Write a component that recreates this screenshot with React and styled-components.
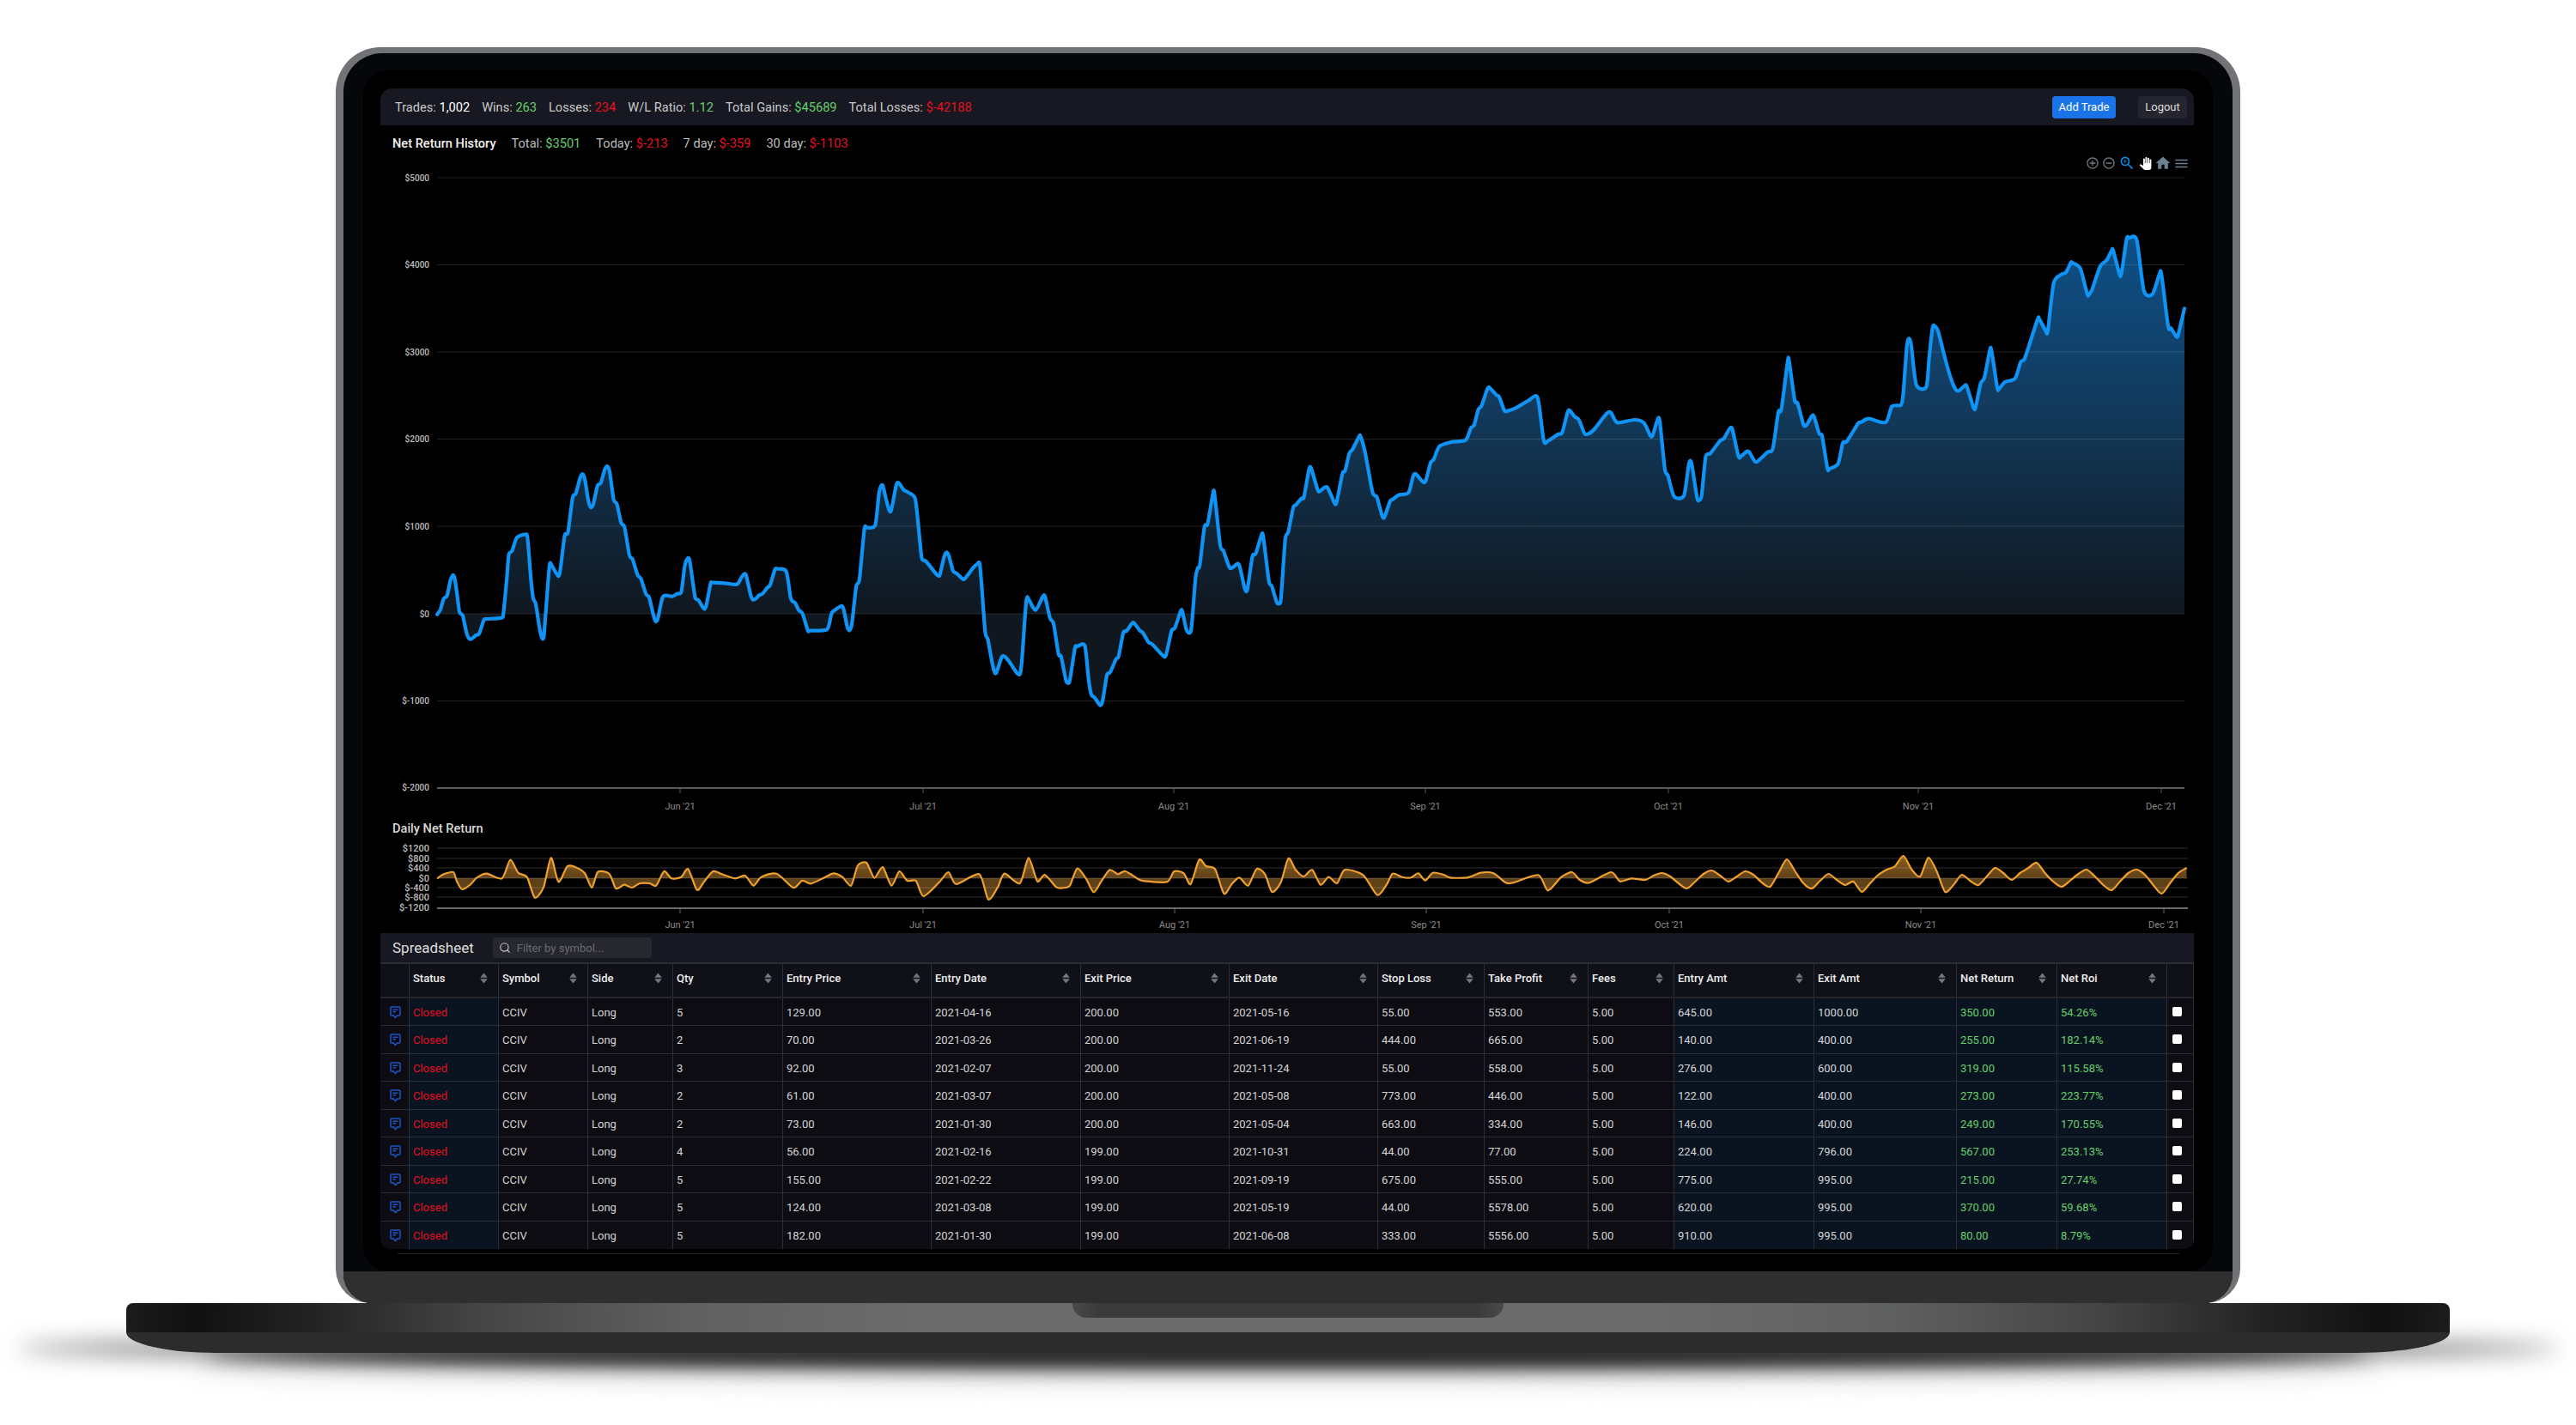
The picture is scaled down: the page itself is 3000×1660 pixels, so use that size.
import React from 'react'
import styled, { createGlobalStyle } from 'styled-components'
import { MdAddCircleOutline, MdRemoveCircleOutline, MdZoomIn, MdPanTool, MdHome, MdMenu } from 'react-icons/md'
import { Search } from 'lucide-react'

const GlobalStyle = createGlobalStyle`
    html, body {
        margin: 0;
        background: #fff;
        font-family: Roboto, "Liberation Sans", sans-serif;
    }
    * { box-sizing: border-box; }
`

const GREEN = '#68cf6c'
const RED = '#e5101f'
const COLUMNS = '34px 104px 104px 99px 128px 173px 174px 173px 173px 124px 121px 100px 163px 166px 117px 128px 31px'

const Stage = styled.div`
    position: relative;
    width: 3000px;
    height: 1660px;
    padding-top: 55px;
    display: flex;
    flex-direction: column;
    align-items: center;
    overflow: hidden;
`

const ShadowWide = styled.div`
    position: absolute;
    left: 20px;
    top: 1556px;
    width: 2960px;
    height: 30px;
    border-radius: 50%;
    background: #5f5f5f;
    filter: blur(13px);
`

const ShadowLow = styled.div`
    position: absolute;
    left: 240px;
    top: 1564px;
    width: 2520px;
    height: 28px;
    border-radius: 50%;
    background: #222;
    filter: blur(10px);
`

const ShadowFade = styled.div`
    position: absolute;
    left: 220px;
    top: 1576px;
    width: 2560px;
    height: 32px;
    border-radius: 50%;
    background: #cfcfcf;
    filter: blur(14px);
`

const Lid = styled.div`
    position: relative;
    width: 2218px;
    height: 1463px;
    padding: 7px 9px 0;
    background: #727377;
    border-radius: 52px 52px 40px 40px;
`

const Bezel = styled.div`
    height: 100%;
    display: flex;
    flex-direction: column;
    background: #05070a;
    border-radius: 45px 45px 34px 34px;
    overflow: hidden;
`

const ScreenFrame = styled.div`
    flex: 1;
    min-height: 0;
    padding: 19px 23px 0;
`

const Screen = styled.div`
    height: 100%;
    padding: 22px 22px 0 20px;
    background: #000;
    border-radius: 30px;
`

const Chin = styled.div`
    height: 37px;
    background: #2f2f2f;
`

const Base = styled.div`
    position: relative;
    width: 2706px;
`

const BaseTop = styled.div`
    height: 34px;
    border-radius: 8px 8px 0 0;
    background: linear-gradient(90deg, #1c1b1b 0%, #111 3%, #232323 8%, #444 15%, #5f6061 24%, #6b6b6b 34%, #6b6b6b 66%, #5f6061 76%, #444 85%, #232323 92%, #111 97%, #1c1b1b 100%);
`

const BaseBottom = styled.div`
    height: 24px;
    background: #2c2c2c;
    border-radius: 0 0 109px 106px / 0 0 24px 24px;
`

const Notch = styled.div`
    position: absolute;
    top: 0;
    left: 1102px;
    width: 502px;
    height: 17px;
    border-radius: 0 0 16px 16px;
    background: linear-gradient(90deg, #4a4a4a, #3a3a3a 6%, #3a3a3a 94%, #4a4a4a);
`

const TopBar = styled.div`
    height: 43px;
    display: flex;
    align-items: center;
    justify-content: space-between;
    padding: 0 8px 0 17px;
    background: #171821;
    border-radius: 14px 14px 0 0;
`

const StatRow = styled.div`
    display: flex;
    align-items: center;
    gap: 14px;
    padding-top: 1px;
    font-size: 14.6px;
    color: #c9c9c9;
`

const Value = styled.span`
    color: ${props => props.$color || '#fff'};
`

const Actions = styled.div`
    display: flex;
    gap: 26px;
`

const Button = styled.div`
    width: ${props => props.$width}px;
    height: 26px;
    display: flex;
    align-items: center;
    justify-content: center;
    border-radius: 4px;
    font-size: 13px;
    color: ${props => props.$primary ? '#fff' : '#ddd'};
    background: ${props => props.$primary ? '#1a73e8' : '#24252e'};
`

const ChartHead = styled.div`
    height: 22px;
    margin-top: 10px;
    padding-left: 14px;
    display: flex;
    align-items: center;
    gap: 18px;
    font-size: 14.6px;
    color: #bdbdbd;
`

const ChartTitle = styled.span`
    font-weight: 500;
    color: #f2f2f2;
`

const DailyTitle = styled.div`
    height: 22px;
    margin-top: 3px;
    padding: 1px 0 0 14px;
    display: flex;
    align-items: center;
    font-size: 14.6px;
    font-weight: 500;
    color: #d8d8d8;
`

const ChartBox = styled.div`
    position: relative;
    height: ${props => props.$height}px;
`

const ChartSvg = styled.svg`
    display: block;
`

const Toolbar = styled.div`
    position: absolute;
    top: 2px;
    right: 6px;
    display: grid;
    grid-template-columns: 20px 18px 24px 18px 24px 18px;
    align-items: center;
    justify-items: center;
    height: 20px;
`

const ToolIcon = styled.span`
    display: flex;
    color: ${props => props.$color};
`

const AxisValue = styled.text`
    font-size: ${props => props.$size}px;
    font-weight: 500;
    fill: #bdbdbd;
    text-anchor: end;
    dominant-baseline: central;
`

const AxisMonth = styled.text`
    font-size: 11px;
    fill: #8b8b8b;
    text-anchor: middle;
    dominant-baseline: central;
`

const SheetBar = styled.div`
    height: 36px;
    padding-left: 14px;
    display: flex;
    align-items: center;
    gap: 22px;
    background: #171821;
    border-bottom: 2px solid #2b2c34;
    font-size: 17px;
    color: #dedede;
`

const FilterBox = styled.div`
    width: 185px;
    height: 24px;
    padding-left: 7px;
    display: flex;
    align-items: center;
    gap: 7px;
    border-radius: 4px;
    background: #26272f;
    font-size: 13px;
    color: #6a6b72;
`

const Sheet = styled.div`
    border-radius: 0 0 12px 12px;
    overflow: hidden;
`

const HeadRow = styled.div`
    display: grid;
    grid-template-columns: ${COLUMNS};
    height: 39.5px;
    background: #101118;
    border-bottom: 2px solid #24252d;
`

const HeadCell = styled.div`
    display: flex;
    align-items: center;
    justify-content: space-between;
    padding: 0 12px 5px 4px;
    border-right: 1px solid #2c2d37;
    font-size: 13px;
    font-weight: 500;
    color: #ececec;
`

const Row = styled.div`
    display: grid;
    grid-template-columns: ${COLUMNS};
    height: 32.5px;
    border-bottom: 1px solid #2a2b34;
    &:last-child { border-bottom: 0; }
`

const Cell = styled.div`
    display: flex;
    align-items: center;
    justify-content: ${props => props.$center ? 'center' : 'flex-start'};
    padding: 2px ${props => props.$center ? 0 : 4}px 0;
    border-right: 1px solid #2c2d37;
    background: ${props => props.$tint ? '#0a1421' : '#0d0c13'};
    font-size: 13px;
    color: ${props => props.$color || '#d4d4d4'};
`

const NoteSvg = styled.svg`
    margin-left: 2px;
`

const CheckBox = styled.input`
    appearance: none;
    width: 11px;
    height: 11px;
    margin: 0 8px 2px 0;
    border-radius: 2px;
    background: #fff;
`

const BottomRule = styled.div`
    height: 1px;
    margin: 5px 17px 0 20px;
    background: #232323;
`

// traced off the reference, each run is [x, y] in its own crop
const toPage = (points, originX, scaleX, originY) =>
    points.map(([x, y]) => [originX + x / scaleX, originY + y / 3])

const netReturn = [
    ...toPage([[50,647],[60,630],[70,592],[80,582],[90,530],[98,510],[104,525],[112,590],[118,640],[128,652],[138,705],[147,732],[155,732],[168,720],[178,714],[192,667],[200,663],[246,659],[252,640],[262,520],[268,438],[278,425],[293,378],[318,368],[325,380],[335,520],[342,590],[350,610],[358,670],[365,715],[370,732],[375,720],[383,600],[392,475],[398,475],[418,513],[425,490],[438,372],[448,360],[462,240],[472,225],[485,170],[493,157],[500,180],[510,250],[518,273],[525,262],[538,197],[548,188],[560,140],[568,130],[575,150],[587,245],[597,262],[610,327],[620,342],[635,440],[645,455],[660,510],[670,522],[685,575],[695,588],[708,650],[715,672],[722,660],[737,585],[765,584],[780,575],[793,568],[803,480],[810,455],[817,453],[825,510],[835,588],[845,597],[858,622],[864,628],[870,610],[882,540],[888,536],[930,539],[962,542],[975,520],[983,507],[990,510],[1003,575],[1010,595],[1020,592],[1030,580],[1040,575],[1055,553],[1063,545],[1078,490],[1087,488],[1112,497],[1125,585],[1130,600],[1140,608],[1150,632],[1162,645],[1178,703],[1185,704],[1235,701],[1245,670],[1252,640],[1280,618],[1287,630],[1298,690],[1305,703],[1312,680],[1325,550],[1335,525],[1350,350],[1358,344],[1383,335],[1395,220],[1405,195],[1415,240],[1425,282],[1432,282],[1447,195],[1455,188],[1470,212],[1485,222],[1505,245],[1518,380],[1525,452],[1538,462]], 490, 2.613, 500),
    ...toPage([[0,505],[8,512],[12,508],[25,445],[33,430],[40,445],[52,495],[62,503],[80,522],[88,522],[115,482],[125,472],[133,470],[140,560],[150,710],[158,735],[170,810],[178,848],[184,850],[200,797],[210,795],[225,815],[245,850],[256,855],[262,800],[275,600],[283,596],[303,632],[325,585],[332,585],[347,660],[358,680],[373,785],[381,795],[395,875],[402,887],[408,875],[423,765],[430,760],[453,757],[465,880],[473,928],[483,938],[500,965],[508,945],[520,860],[530,850],[548,803],[556,793],[570,712],[580,705],[598,677],[605,680],[620,703],[630,712],[647,745],[657,750],[690,790],[700,790],[717,705],[727,695],[745,635],[750,637],[762,700],[772,712],[778,690],[790,520],[797,485],[803,475],[817,342],[827,330],[843,225],[848,228],[865,405],[875,425],[893,483],[903,483],[922,473],[940,558],[948,558],[963,445],[973,435],[990,372],[996,375],[1013,530],[1022,548],[1037,605],[1045,608],[1050,590],[1063,385],[1072,360],[1087,275],[1095,265],[1112,242],[1120,237],[1135,142],[1142,137],[1162,213],[1170,215],[1190,202],[1213,258],[1220,252],[1237,155],[1245,145],[1258,85],[1268,70],[1288,25],[1292,25],[1305,75],[1327,212],[1335,232],[1342,238],[1358,303],[1365,307],[1382,252],[1390,245],[1408,230],[1438,222],[1452,165],[1460,156],[1480,182],[1490,182],[1505,118],[1515,105],[1532,60]], 1090, 2.613, 500),
    ...toPage([[28,345],[75,338],[92,296],[103,285],[117,230],[127,218],[147,157],[155,157],[175,180],[185,188],[202,235],[215,235],[240,225],[280,200],[310,190],[330,340],[345,340],[378,317],[390,312],[408,240],[415,235],[430,255],[445,268],[463,315],[478,315],[495,300],[525,258],[540,241],[550,243],[570,277],[625,267],[657,278],[677,322],[685,322],[700,270],[708,270],[725,440],[735,462],[755,535],[787,532],[803,422],[812,420],[830,540],[838,547],[845,530],[858,397],[873,385],[905,340],[917,333],[935,300],[945,300],[965,395],[975,393],[992,378],[1000,380],[1018,412],[1028,412],[1060,380],[1077,368],[1095,240],[1105,230],[1125,65],[1130,62],[1148,198],[1158,210],[1177,285],[1187,285],[1205,253],[1212,258],[1228,315],[1238,325],[1255,437],[1262,438],[1290,420],[1305,348],[1318,343],[1355,280],[1365,275],[1390,263],[1445,276]], 1680, 2.8, 400),
    ...toPage([[10,700],[42,695],[50,650],[62,490],[70,462],[78,490],[95,625],[130,632],[140,530],[152,425],[160,420],[172,440],[195,530],[215,600],[232,640],[245,645],[268,625],[278,650],[295,705],[302,705],[320,620],[333,600],[352,505],[358,505],[378,635],[385,638],[405,615],[440,603],[460,545],[475,530],[518,398],[525,395],[548,438],[555,435],[575,270],[600,240],[618,232],[635,198],[640,198],[668,218],[692,307],[698,310],[710,290],[738,210],[760,190],[778,155],[783,155],[805,237],[812,235],[830,115],[838,112],[865,118],[890,295],[920,308],[945,237],[952,240],[975,420],[985,427],[1003,455],[1010,450],[1032,358]], 2200, 3, 240),
]

const dailyTail = [2,-3,-6,-2,6,12,4,-5,-9,-3,4,-2,-8,-4,5,10,-6,-22,-8,6,12,3,-5,2,8,4,16,6,-4,-10,-14,-26,-10,-2,-24,-8,16,8,-4,3,8,-2,-12,-6,2,-6,-12,-18,-6,4,10,3,-5,-10,-2,8,14,4,-6,-10,-4,8,18,6,-6,-12]

const dailyReturn = [
    ...toPage([[155,250],[170,235],[192,228],[200,260],[212,288],[232,270],[245,248],[268,233],[303,250],[322,185],[340,230],[360,245],[378,317],[398,280],[415,178],[432,262],[452,208],[470,210],[492,232],[508,282],[522,227],[548,234],[563,285],[582,272],[600,282],[618,267],[640,267],[655,275],[673,225],[690,250],[712,245],[728,217],[748,290],[765,260],[785,225],[805,235],[835,250],[858,240],[877,275],[895,245],[930,233],[968,282],[988,258],[1008,268],[1035,250],[1060,232],[1080,245],[1100,275],[1115,205],[1135,195],[1153,248],[1172,210],[1192,275],[1210,225],[1228,258],[1248,258],[1265,312],[1300,265],[1322,228],[1340,270],[1392,235],[1413,323],[1435,280],[1450,233],[1485,267],[1505,178],[1525,260],[1542,237],[1568,280]], 430, 1.96, 940),
    ...toPage([[85,223],[103,215],[122,155],[145,190],[165,238],[185,200],[207,160],[228,175],[248,165],[285,195],[305,200],[357,202],[375,165],[400,172],[418,210],[440,125],[458,147],[482,158],[505,243],[525,210],[545,187],[568,215],[590,157],[612,175],[630,237],[653,205],[673,120],[692,160],[713,183],[735,160],[757,212],[778,185],[800,207],[820,160],[868,178],[905,248],[930,210],[945,173],[970,185],[993,187],[1012,172],[1030,197],[1050,170],[1078,177],[1095,187],[1140,187],[1175,170],[1208,172],[1240,205],[1260,205],[1325,178],[1350,232],[1385,185],[1413,168],[1433,195],[1458,205],[1515,168],[1538,200],[1568,190]], 1200, 2.24, 960),
    ...dailyTail.map((delta, i) => [1916 + i * 9.7, 1023 + delta]),
]

const smoothPath = points => {
    let d = `M${points[0][0].toFixed(1)} ${points[0][1].toFixed(1)}`
    for (let i = 0; i < points.length - 1; i++) {
        const p0 = points[i - 1] || points[i]
        const p1 = points[i]
        const p2 = points[i + 1]
        const p3 = points[i + 2] || p2
        const c1 = [p1[0] + (p2[0] - p0[0]) / 8, p1[1] + (p2[1] - p0[1]) / 8]
        const c2 = [p2[0] - (p3[0] - p1[0]) / 8, p2[1] - (p3[1] - p1[1]) / 8]
        d += `C${c1[0].toFixed(1)} ${c1[1].toFixed(1)} ${c2[0].toFixed(1)} ${c2[1].toFixed(1)} ${p2[0].toFixed(1)} ${p2[1].toFixed(1)}`
    }
    return d
}

const areaPath = (points, base) =>
    `${smoothPath(points)}L${points[points.length - 1][0]} ${base}L${points[0][0]} ${base}Z`

const mainTicks = [
    ['$5000', 207], ['$4000', 308.5], ['$3000', 410], ['$2000', 511.5],
    ['$1000', 613], ['$0', 715], ['$-1000', 816.5], ['$-2000', 917],
]
const dailyTicks = [
    ['$1200', 988], ['$800', 1000], ['$400', 1011], ['$0', 1023],
    ['$-400', 1034], ['$-800', 1045], ['$-1200', 1057],
]
const mainMonths = [
    ["Jun '21", 792], ["Jul '21", 1075], ["Aug '21", 1367], ["Sep '21", 1660],
    ["Oct '21", 1943], ["Nov '21", 2234], ["Dec '21", 2517],
]
const dailyMonths = [
    ["Jun '21", 792], ["Jul '21", 1075], ["Aug '21", 1368], ["Sep '21", 1661],
    ["Oct '21", 1944], ["Nov '21", 2237], ["Dec '21", 2520],
]

function MainChart() {
    return (
        <ChartBox $height={772}>
            <ChartSvg width="2112" height="772" viewBox="443 178 2112 772">
                <defs>
                    <linearGradient id="netFill" gradientUnits="userSpaceOnUse" x1="0" y1="280" x2="0" y2="715">
                        <stop offset="0" stopColor="#0d4f86" />
                        <stop offset="0.45" stopColor="#123a5c" />
                        <stop offset="1" stopColor="#10171f" />
                    </linearGradient>
                </defs>
                <path d={areaPath(netReturn, 715)} fill="url(#netFill)" />
                {mainTicks.map(([label, y], i) => (
                    <g key={label}>
                        {i < 7 && <line x1="509" x2="2544" y1={y} y2={y} stroke="rgba(255,255,255,0.13)" />}
                        <AxisValue $size={10} x="500" y={y}>{label}</AxisValue>
                    </g>
                ))}
                <path d={smoothPath(netReturn)} fill="none" stroke="#0f93f5" strokeWidth="4.2" strokeLinejoin="round" strokeLinecap="round" />
                <line x1="509" x2="2544" y1="918" y2="918" stroke="#5a5a5a" strokeWidth="2" />
                {mainMonths.map(([label, x]) => (
                    <g key={label}>
                        <line x1={x} x2={x} y1="918" y2="924" stroke="#5a5a5a" />
                        <AxisMonth x={x} y="939">{label}</AxisMonth>
                    </g>
                ))}
            </ChartSvg>
            <Toolbar>
                <ToolIcon $color="#6e7780"><MdAddCircleOutline size={16} /></ToolIcon>
                <ToolIcon $color="#6e7780"><MdRemoveCircleOutline size={16} /></ToolIcon>
                <ToolIcon $color="#0a8ae6"><MdZoomIn size={20} /></ToolIcon>
                <ToolIcon $color="#ffffff"><MdPanTool size={15} /></ToolIcon>
                <ToolIcon $color="#6e8192"><MdHome size={20} /></ToolIcon>
                <ToolIcon $color="#6e8192"><MdMenu size={19} /></ToolIcon>
            </Toolbar>
        </ChartBox>
    )
}

function DailyChart() {
    return (
        <ChartBox $height={112}>
            <ChartSvg width="2112" height="112" viewBox="443 975 2112 112">
                <defs>
                    <linearGradient id="dayFill" gradientUnits="userSpaceOnUse" x1="0" y1="995" x2="0" y2="1023">
                        <stop offset="0" stopColor="#8f5f1f" />
                        <stop offset="1" stopColor="#5f4118" />
                    </linearGradient>
                </defs>
                <path d={areaPath(dailyReturn, 1023)} fill="url(#dayFill)" />
                {dailyTicks.map(([label, y], i) => (
                    <g key={label}>
                        {i < 6 && <line x1="509" x2="2548" y1={y} y2={y} stroke="rgba(255,255,255,0.13)" strokeWidth="1.5" />}
                        <AxisValue $size={11} x="500" y={y}>{label}</AxisValue>
                    </g>
                ))}
                <path d={smoothPath(dailyReturn)} fill="none" stroke="#efa02f" strokeWidth="2.2" strokeLinejoin="round" />
                <line x1="509" x2="2548" y1="1058" y2="1058" stroke="#6a6a6a" strokeWidth="2" />
                {dailyMonths.map(([label, x]) => (
                    <g key={label}>
                        <line x1={x} x2={x} y1="1058" y2="1064" stroke="#6a6a6a" />
                        <AxisMonth x={x} y="1077">{label}</AxisMonth>
                    </g>
                ))}
            </ChartSvg>
        </ChartBox>
    )
}

const SortIcon = () => (
    <svg width="9" height="13" viewBox="0 0 9 13">
        <path d="M4.500 0.500 L8.800 5.800 H0.200 Z M4.500 12.500 L8.800 7.200 H0.200 Z" fill="#75767c" />
    </svg>
)

const NoteIcon = () => (
    <NoteSvg width="13" height="15" viewBox="0 0 13 15" fill="none" stroke="#1d55c9" strokeWidth="1.5">
        <path d="M2.200 1h8.600a1.200 1.200 0 0 1 1.200 1.200v7.600a1.200 1.200 0 0 1-1.200 1.200H8.500L6.500 13.600 4.500 11H2.200A1.200 1.200 0 0 1 1 9.800V2.200A1.200 1.200 0 0 1 2.200 1z" />
        <path d="M3.500 4.200h6M3.500 6.800h3.500" />
    </NoteSvg>
)

const headers = ['Status', 'Symbol', 'Side', 'Qty', 'Entry Price', 'Entry Date', 'Exit Price', 'Exit Date', 'Stop Loss', 'Take Profit', 'Fees', 'Entry Amt', 'Exit Amt', 'Net Return', 'Net Roi']

const trades = [
    ['5', '129.00', '2021-04-16', '200.00', '2021-05-16', '55.00', '553.00', '645.00', '1000.00', '350.00', '54.26%'],
    ['2', '70.00', '2021-03-26', '200.00', '2021-06-19', '444.00', '665.00', '140.00', '400.00', '255.00', '182.14%'],
    ['3', '92.00', '2021-02-07', '200.00', '2021-11-24', '55.00', '558.00', '276.00', '600.00', '319.00', '115.58%'],
    ['2', '61.00', '2021-03-07', '200.00', '2021-05-08', '773.00', '446.00', '122.00', '400.00', '273.00', '223.77%'],
    ['2', '73.00', '2021-01-30', '200.00', '2021-05-04', '663.00', '334.00', '146.00', '400.00', '249.00', '170.55%'],
    ['4', '56.00', '2021-02-16', '199.00', '2021-10-31', '44.00', '77.00', '224.00', '796.00', '567.00', '253.13%'],
    ['5', '155.00', '2021-02-22', '199.00', '2021-09-19', '675.00', '555.00', '775.00', '995.00', '215.00', '27.74%'],
    ['5', '124.00', '2021-03-08', '199.00', '2021-05-19', '44.00', '5578.00', '620.00', '995.00', '370.00', '59.68%'],
    ['5', '182.00', '2021-01-30', '199.00', '2021-06-08', '333.00', '5556.00', '910.00', '995.00', '80.00', '8.79%'],
]

function Spreadsheet() {
    return (
        <div>
            <SheetBar>
                Spreadsheet
                <FilterBox>
                    <Search size={14} color="#c4c4c8" />
                    Filter by symbol...
                </FilterBox>
            </SheetBar>
            <Sheet>
                <HeadRow>
                    <HeadCell />
                    {headers.map(name => (
                        <HeadCell key={name}>{name}<SortIcon /></HeadCell>
                    ))}
                    <HeadCell />
                </HeadRow>
                {trades.map((t, i) => (
                    <Row key={i}>
                        <Cell $center><NoteIcon /></Cell>
                        <Cell $tint $color={RED}>Closed</Cell>
                        <Cell>CCIV</Cell>
                        <Cell>Long</Cell>
                        <Cell>{t[0]}</Cell>
                        <Cell>{t[1]}</Cell>
                        <Cell>{t[2]}</Cell>
                        <Cell>{t[3]}</Cell>
                        <Cell>{t[4]}</Cell>
                        <Cell>{t[5]}</Cell>
                        <Cell>{t[6]}</Cell>
                        <Cell>5.00</Cell>
                        <Cell $tint>{t[7]}</Cell>
                        <Cell $tint>{t[8]}</Cell>
                        <Cell $tint $color={GREEN}>{t[9]}</Cell>
                        <Cell $tint $color={GREEN}>{t[10]}</Cell>
                        <Cell $center><CheckBox type="checkbox" readOnly /></Cell>
                    </Row>
                ))}
            </Sheet>
            <BottomRule />
        </div>
    )
}

export default function App() {
    return (
        <Stage>
            <GlobalStyle />
            <ShadowFade />
            <ShadowWide />
            <ShadowLow />
            <Lid>
                <Bezel>
                    <ScreenFrame>
                        <Screen>
                            <TopBar>
                                <StatRow>
                                    <span>Trades: <Value>1,002</Value></span>
                                    <span>Wins: <Value $color={GREEN}>263</Value></span>
                                    <span>Losses: <Value $color={RED}>234</Value></span>
                                    <span>W/L Ratio: <Value $color={GREEN}>1.12</Value></span>
                                    <span>Total Gains: <Value $color={GREEN}>$45689</Value></span>
                                    <span>Total Losses: <Value $color={RED}>$-42188</Value></span>
                                </StatRow>
                                <Actions>
                                    <Button $primary $width={74}>Add Trade</Button>
                                    <Button $width={57}>Logout</Button>
                                </Actions>
                            </TopBar>
                            <ChartHead>
                                <ChartTitle>Net Return History</ChartTitle>
                                <span>Total: <Value $color={GREEN}>$3501</Value></span>
                                <span>Today: <Value $color={RED}>$-213</Value></span>
                                <span>7 day: <Value $color={RED}>$-359</Value></span>
                                <span>30 day: <Value $color={RED}>$-1103</Value></span>
                            </ChartHead>
                            <MainChart />
                            <DailyTitle>Daily Net Return</DailyTitle>
                            <DailyChart />
                            <Spreadsheet />
                        </Screen>
                    </ScreenFrame>
                    <Chin />
                </Bezel>
            </Lid>
            <Base>
                <BaseTop />
                <BaseBottom />
                <Notch />
            </Base>
        </Stage>
    )
}
